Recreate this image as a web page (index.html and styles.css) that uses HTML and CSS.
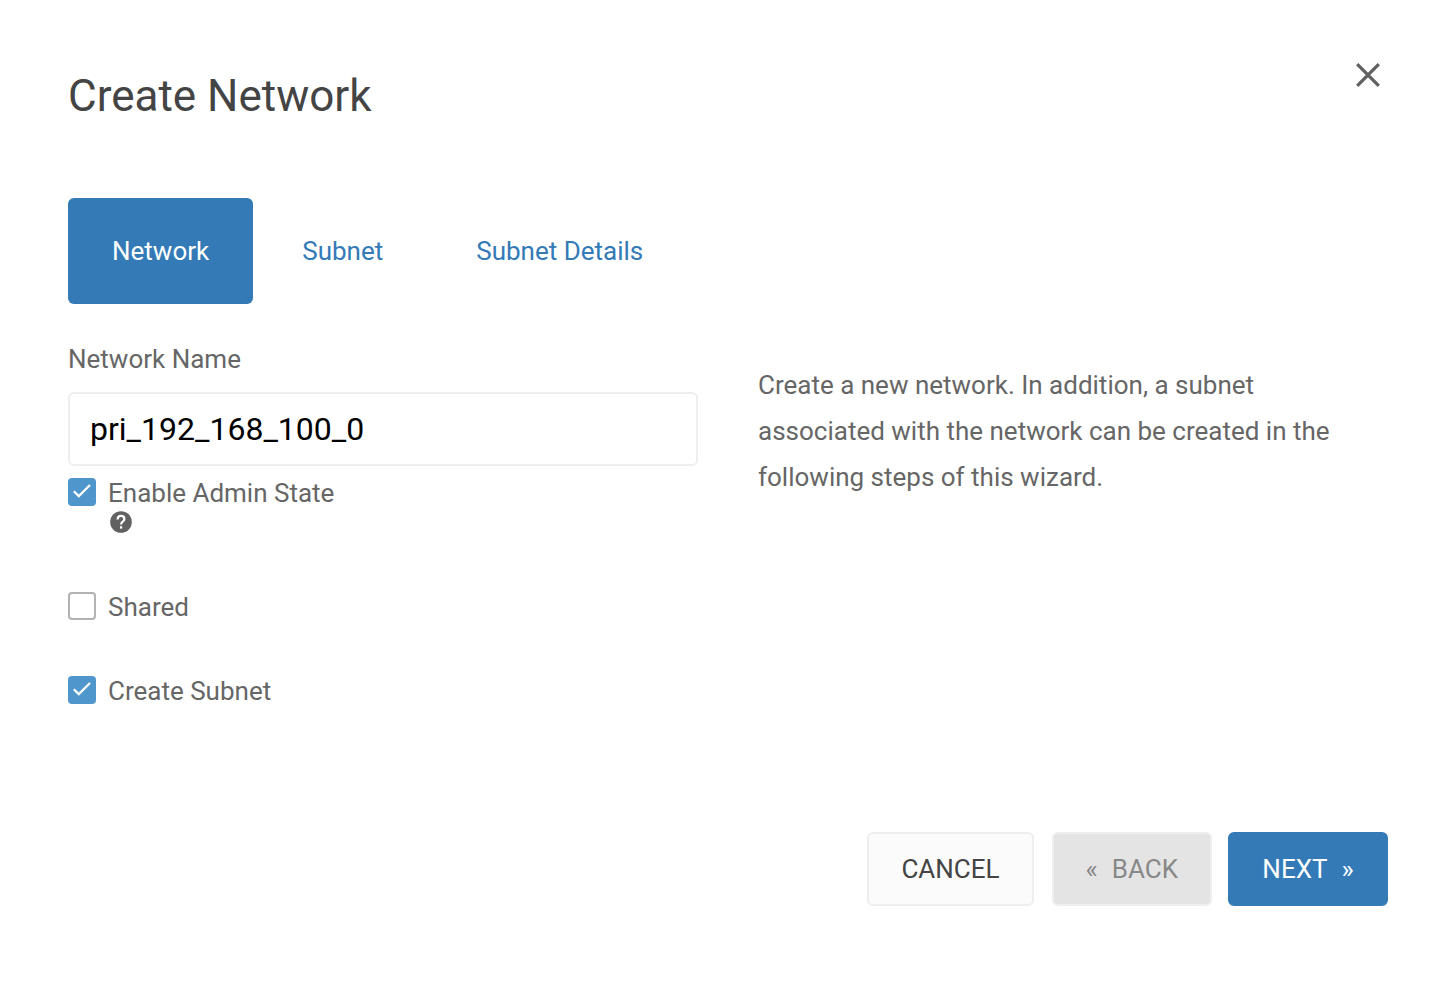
FILE: index.html
```html
<!DOCTYPE html>
<html lang="en">
<head>
  <meta charset="UTF-8" />
  <meta name="viewport" content="width=device-width, initial-scale=1.0"/>
  <title>Create Network</title>
  <link rel="stylesheet" href="styles.css">
</head>
<body>
  <form class="modal">
    <header class="modal-header">
      <h1>Create Network</h1>
      <button class="close" type="button" aria-label="Close">
        <svg width="24" height="24" viewBox="0 0 24 24" fill="none" stroke="#616161" stroke-width="3.3">
          <path d="M1.2 1.2L22.8 22.8M22.8 1.2L1.2 22.8"/>
        </svg>
      </button>
    </header>

    <!-- Wizard steps -->
    <nav class="tabs">
      <a class="tab active" href="#network">Network</a>
      <a class="tab" href="#subnet">Subnet</a>
      <a class="tab" href="#details">Subnet Details</a>
    </nav>

    <div class="row" id="network">
      <div class="fields">
        <label class="field-label" for="net-name">Network Name</label>
        <input class="input-box" type="text" id="net-name" value="pri_192_168_100_0" />

        <div class="check admin-state">
          <input type="checkbox" id="admin-state" checked />
          <label for="admin-state">Enable Admin State</label>
          <svg class="help" width="22" height="22" viewBox="0 0 22 22">
            <circle cx="11" cy="11" r="10.8" fill="#616161"/>
            <path d="M7.6 8.5C7.6 6.2 9 4.8 11 4.8S14.4 6.1 14.4 8C14.4 10.4 11.1 10.6 11.1 13.4" fill="none" stroke="#fff" stroke-width="2.2"/>
            <rect x="10" y="15.2" width="2.2" height="2.4" fill="#fff"/>
          </svg>
        </div>
        <div class="check">
          <input type="checkbox" id="shared" />
          <label for="shared">Shared</label>
        </div>
        <div class="check">
          <input type="checkbox" id="create-subnet" checked />
          <label for="create-subnet">Create Subnet</label>
        </div>
      </div>

      <p class="description">Create a new network. In addition, a subnet associated with the network can be created in the following steps of this wizard.</p>
    </div>

    <footer class="modal-footer">
      <button class="btn btn-cancel" type="button">CANCEL</button>
      <button class="btn btn-back" type="button" disabled><span>«</span><span>BACK</span></button>
      <button class="btn btn-next" type="button"><span>NEXT</span><span>»</span></button>
    </footer>
  </form>
</body>
</html>
```

FILE: styles.css
```css
:root {
  --primary: #337ab7;
  --check: #4f96cd;
  --text-color: #666;
  --heading: #444;
  --border: #eee;
}

* {
  box-sizing: border-box;
}

body {
  font-family: Roboto, sans-serif;
  font-size: 26px;
  line-height: 36px;
  color: var(--text-color);
  background: white;
  margin: 0;
}

.modal {
  padding: 62px 66px 76px 68px;
}

.modal-header {
  display: flex;
  justify-content: space-between;
  align-items: flex-start;
  margin-bottom: 68px;
}

h1 {
  margin: 0;
  font-size: 44px;
  line-height: 68px;
  font-weight: normal;
  color: var(--heading);
}

.close {
  display: flex;
  padding: 0;
  margin: 1px 8px 0 0;
  border: none;
  background: none;
  cursor: pointer;
}

.tabs {
  display: flex;
  gap: 5px;
  margin-bottom: 38px;
}

.tab {
  padding: 35px 44px;
  border-radius: 6px;
  color: var(--primary);
  text-decoration: none;
}

.tab.active {
  background: var(--primary);
  color: white;
}

.row {
  display: grid;
  grid-template-columns: 1fr 1fr;
  gap: 60px;
}

.field-label {
  display: block;
  line-height: 34px;
  margin-bottom: 16px;
}

.input-box {
  display: block;
  width: 100%;
  height: 74px;
  padding: 0 20px;
  border: 2px solid var(--border);
  border-radius: 6px;
  font-family: inherit;
  font-size: 32px;
  color: black;
}

.check {
  display: grid;
  grid-template-columns: 28px 1fr;
  column-gap: 12px;
  align-items: center;
  margin-bottom: 46px;
}

.check.admin-state {
  margin-top: 7px;
  margin-bottom: 54px;
}

.check label {
  padding-top: 2px;
}

.check input {
  appearance: none;
  display: flex;
  align-items: center;
  justify-content: center;
  width: 28px;
  height: 28px;
  margin: 0;
  border: 2px solid #b2b2b2;
  border-radius: 4px;
}

.check input:checked {
  border-color: var(--check);
  background: var(--check);
}

.check input:checked::after {
  content: "";
  width: 20px;
  height: 20px;
  background: white;
  clip-path: polygon(5% 50%, 13% 42%, 34% 63%, 86% 11%, 94% 19%, 34% 79%);
}

.help {
  grid-column: 2;
  margin-left: 2px;
}

.description {
  margin: 20px 0 0;
  padding-right: 30px;
  line-height: 46px;
}

.modal-footer {
  display: flex;
  justify-content: flex-end;
  gap: 16px;
  margin-top: 77px;
}

.btn {
  display: flex;
  align-items: center;
  justify-content: center;
  gap: 14px;
  min-width: 160px;
  height: 74px;
  padding: 0 32px;
  border: 2px solid var(--border);
  border-radius: 6px;
  font-family: inherit;
  font-size: 26px;
  cursor: pointer;
}

.btn-cancel {
  margin-right: 2px;
  background: #fbfbfb;
  color: var(--heading);
}

.btn-back {
  background: #e4e4e4;
  color: #888;
}

.btn-next {
  border-color: var(--primary);
  background: var(--primary);
  color: white;
}
```
